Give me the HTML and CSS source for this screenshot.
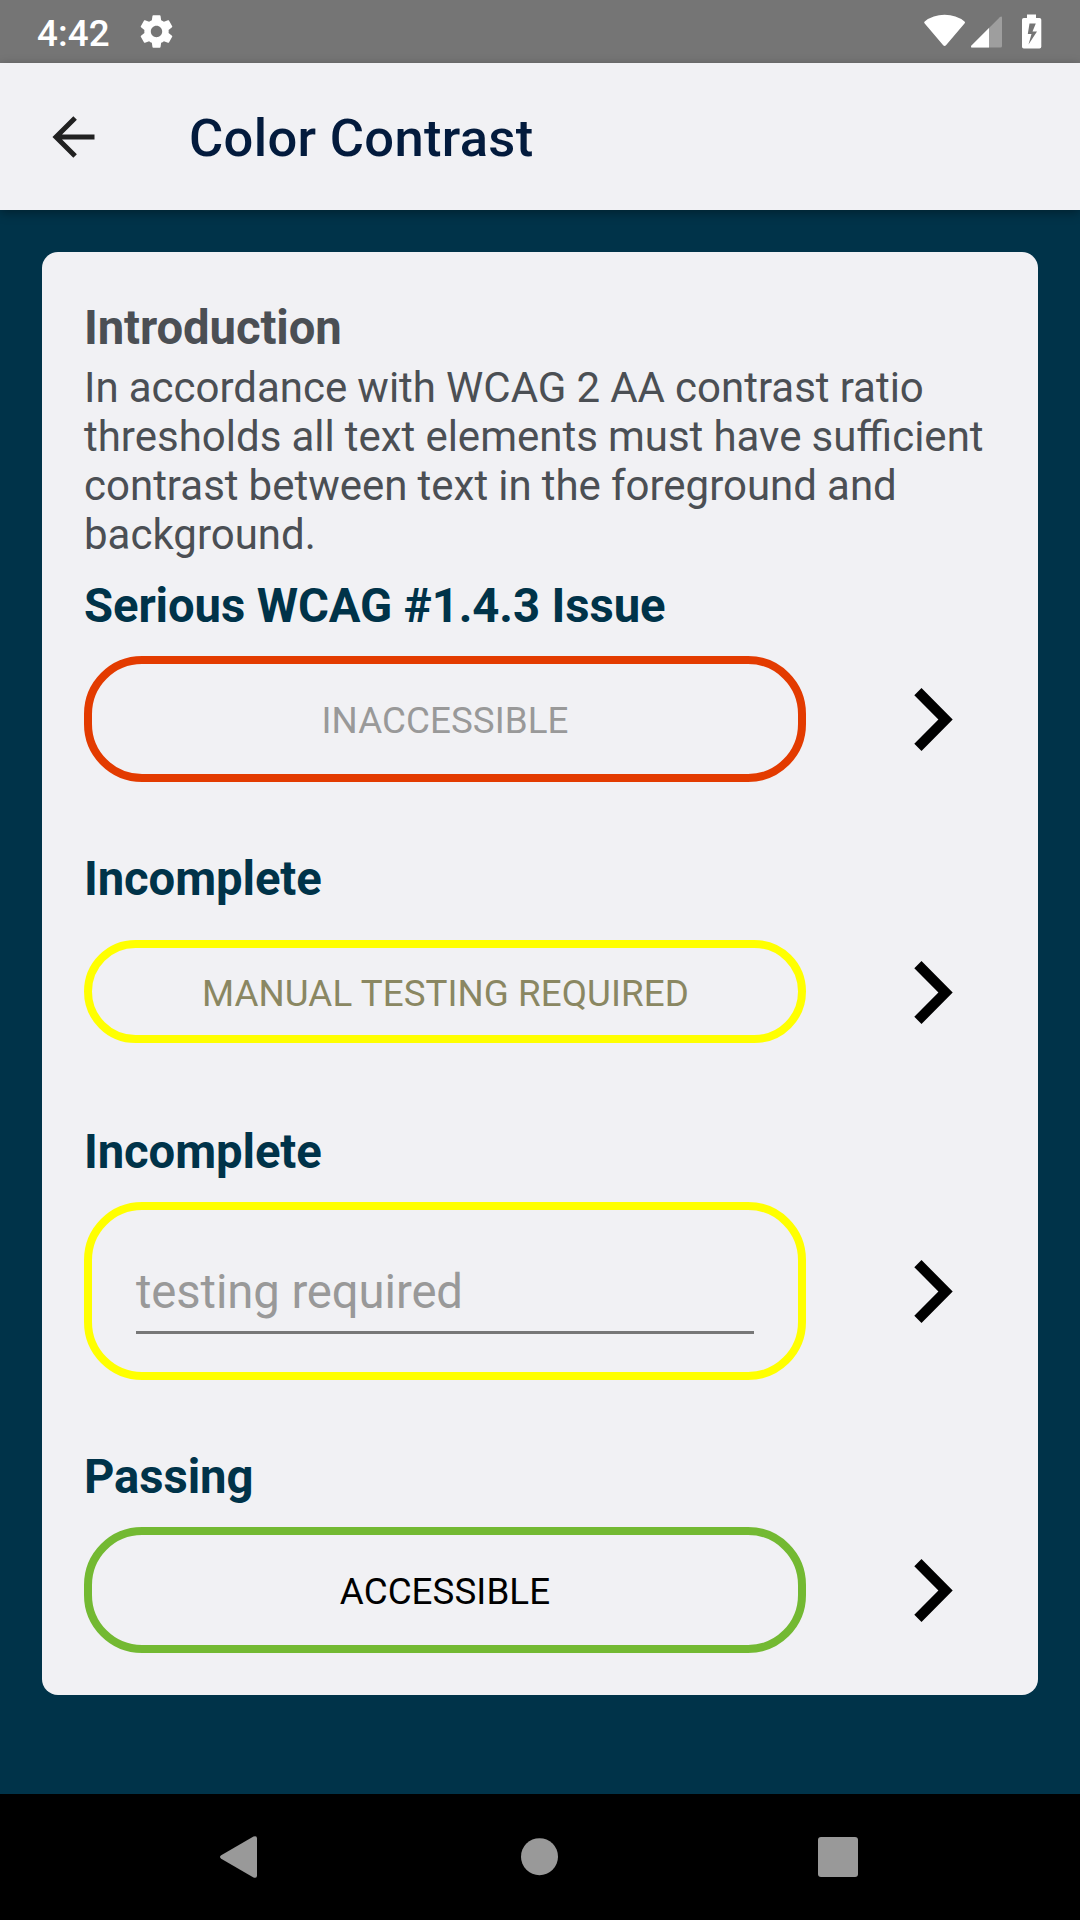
FILE: index.html
```html
<!DOCTYPE html>
<html lang="en">
<head>
<meta charset="utf-8">
<title>Color Contrast</title>
<link rel="stylesheet" href="styles.css">
</head>
<body>
<div class="screen">
  <header class="status">
    <span class="time">4:42</span>
    <svg class="gear" width="39" height="39" viewBox="0 0 24 24"><path d="M19.43 12.98c.04-.32.07-.64.07-.98s-.03-.66-.07-.98l2.11-1.65c.19-.15.24-.42.12-.64l-2-3.46c-.12-.22-.39-.3-.61-.22l-2.49 1c-.52-.4-1.08-.73-1.69-.98l-.38-2.65C14.46 2.18 14.25 2 14 2h-4c-.25 0-.46.18-.49.42l-.38 2.65c-.61.25-1.17.59-1.69.98l-2.49-1c-.23-.09-.49 0-.61.22l-2 3.46c-.13.22-.07.49.12.64l2.11 1.65c-.04.32-.07.65-.07.98s.03.66.07.98l-2.11 1.65c-.19.15-.24.42-.12.64l2 3.46c.12.22.39.3.61.22l2.49-1c.52.4 1.08.73 1.69.98l.38 2.65c.03.24.24.42.49.42h4c.25 0 .46-.18.49-.42l.38-2.65c.61-.25 1.17-.59 1.69-.98l2.49 1c.23.09.49 0 .61-.22l2-3.46c.12-.22.07-.49-.12-.64l-2.11-1.65zM12 15.5c-1.93 0-3.5-1.57-3.5-3.5s1.57-3.5 3.5-3.5 3.5 1.57 3.5 3.5-1.57 3.5-3.5 3.5z"/></svg>
    <svg class="system" width="120" height="36" viewBox="0 0 120 36">
      <path d="M1.7 7.500Q10 .8 21.600 .8T41.500 7.500Q42.500 8.300 41.700 9.300L23 31.300Q21.600 32.800 20.200 31.300L1.500 9.300Q.7 8.300 1.700 7.500Z"/>
      <path opacity=".3" d="M48.500 31.500 76.800 3.200Q78.900 1.500 79 4V32Q79 33.500 77.500 33.500H49.500Q47 33.500 48.500 31.500Z"/>
      <path d="M48.500 31.500 66 14V33.500H49.500Q47 33.500 48.500 31.500Z"/>
      <path fill-rule="evenodd" d="M104 .5h9v3.500h3.500q1.800 0 1.800 1.800v26.900q0 1.800-1.800 1.800h-15.700q-1.800 0-1.800-1.800V5.800q0-1.800 1.800-1.800h3.200ZM106.500 9.500 104.800 20H108.500L105.500 30.500 114 17.500H109.500L112.800 9.500Z"/>
    </svg>
  </header>
  <div class="appbar">
    <svg class="back" width="44" height="44" viewBox="0 0 44 44"><path d="M43.500 22H5.500M24.100 2.900 5 22 24.100 41.100"/></svg>
    <h1 class="title">Color Contrast</h1>
  </div>
  <main class="content">
    <div class="card">
      <h2 class="heading intro">Introduction</h2>
      <p class="body">In accordance with WCAG 2 AA contrast ratio thresholds all text elements must have sufficient contrast between text in the foreground and background.</p>
      <section class="example">
        <h2 class="heading">Serious WCAG #1.4.3 Issue</h2>
        <div class="row">
          <div class="pill fail">INACCESSIBLE</div>
          <svg class="chevron" width="39" height="63" viewBox="0 0 39 63"><path d="M7.500 0 38.700 31.500 7.500 63 .300 55.800 24.400 31.500 .300 7.200Z"/></svg>
        </div>
      </section>
      <section class="example">
        <h2 class="heading">Incomplete</h2>
        <div class="row">
          <div class="pill manual">MANUAL TESTING REQUIRED</div>
          <svg class="chevron" width="39" height="63" viewBox="0 0 39 63"><path d="M7.500 0 38.700 31.500 7.500 63 .300 55.800 24.400 31.500 .300 7.200Z"/></svg>
        </div>
      </section>
      <section class="example">
        <h2 class="heading">Incomplete</h2>
        <div class="row">
          <div class="pill field"><div class="hint">testing required</div></div>
          <svg class="chevron" width="39" height="63" viewBox="0 0 39 63"><path d="M7.500 0 38.700 31.500 7.500 63 .300 55.800 24.400 31.500 .300 7.200Z"/></svg>
        </div>
      </section>
      <section class="example">
        <h2 class="heading">Passing</h2>
        <div class="row">
          <div class="pill pass">ACCESSIBLE</div>
          <svg class="chevron" width="39" height="63" viewBox="0 0 39 63"><path d="M7.500 0 38.700 31.500 7.500 63 .300 55.800 24.400 31.500 .300 7.200Z"/></svg>
        </div>
      </section>
    </div>
  </main>
  <nav class="navbar">
    <svg width="42" height="44" viewBox="0 0 42 44"><path d="M3.200 20.300 35.500 1.600Q39 .2 39 3.500V40.500Q39 43.800 35.500 42.400L3.200 23.700Q.8 22 3.200 20.300Z"/></svg>
    <svg width="40" height="38" viewBox="0 0 40 38"><circle cx="20.500" cy="18.700" r="18.500"/></svg>
    <svg width="40" height="40" viewBox="0 0 40 40"><rect width="40" height="40" rx="3"/></svg>
  </nav>
</div>
</body>
</html>
```
FILE: styles.css
```css
* { box-sizing: border-box; }
body { margin: 0; font-family: Roboto, sans-serif; background: #003349; }
h1, h2, p { margin: 0; }
svg { display: block; flex: none; }

.screen { width: 1080px; height: 1920px; display: flex; flex-direction: column; }

.status {
  height: 63px;
  display: flex;
  align-items: center;
  padding: 0 37px;
  background: #757575;
  color: #fff;
  fill: #fff;
}
.time { font-size: 36.75px; font-weight: 500; line-height: 43px; padding-top: 3px; letter-spacing: .1px; }
.gear { margin-left: 27px; }
.system { margin-left: auto; }

.appbar {
  position: relative;
  height: 147px;
  display: flex;
  align-items: center;
  padding-left: 51px;
  background: #f1f1f4;
  box-shadow: 0 3px 10px rgba(0, 0, 0, .35);
}
.back { fill: none; stroke: #212121; stroke-width: 5; }
.title { margin: 3px 0 0 94px; font-size: 52.5px; font-weight: 500; line-height: 62px; letter-spacing: .32px; color: #031b3d; }

.content { flex: 1; padding: 42px; background: #003349; }
.card { padding: 48px 42px 42px; border-radius: 16px; background: #f1f1f4; }

.heading { font-size: 47.25px; font-weight: 700; line-height: 56px; letter-spacing: -.1px; color: #003349; }
.intro { color: #4b4f54; }
.body { margin: 7px 0 19px; font-size: 42px; line-height: 49px; word-spacing: -.35px; color: #4b4f54; }

.example + .example { margin-top: 69px; }
.row { display: flex; align-items: center; min-height: 126px; margin-top: 22px; }
.chevron { margin-left: 108px; }

.pill {
  width: 722px;
  height: 126px;
  display: flex;
  align-items: center;
  justify-content: center;
  padding-top: 3px;
  border: 8px solid;
  border-radius: 58px;
  font-size: 36.75px;
  line-height: 43px;
  letter-spacing: .06px;
}
.fail { border-color: #e33b00; color: #999; }
.manual { height: 103px; margin-bottom: 1px; padding: 4px 0 0 1px; border-color: #ff0; color: #8a8762; }
.field { height: 178px; padding-top: 5px; border-color: #ff0; }
.pass { border-color: #73b932; color: #000; }
.hint {
  width: 618px;
  height: 70px;
  margin-top: 11px;
  border-bottom: 3px solid #777;
  font-size: 47.25px;
  line-height: 56px;
  letter-spacing: -.1px;
  color: #999;
}

.navbar {
  height: 126px;
  display: flex;
  align-items: center;
  justify-content: space-between;
  padding: 0 222px 0 218px;
  background: #000;
  fill: #999;
}
```
